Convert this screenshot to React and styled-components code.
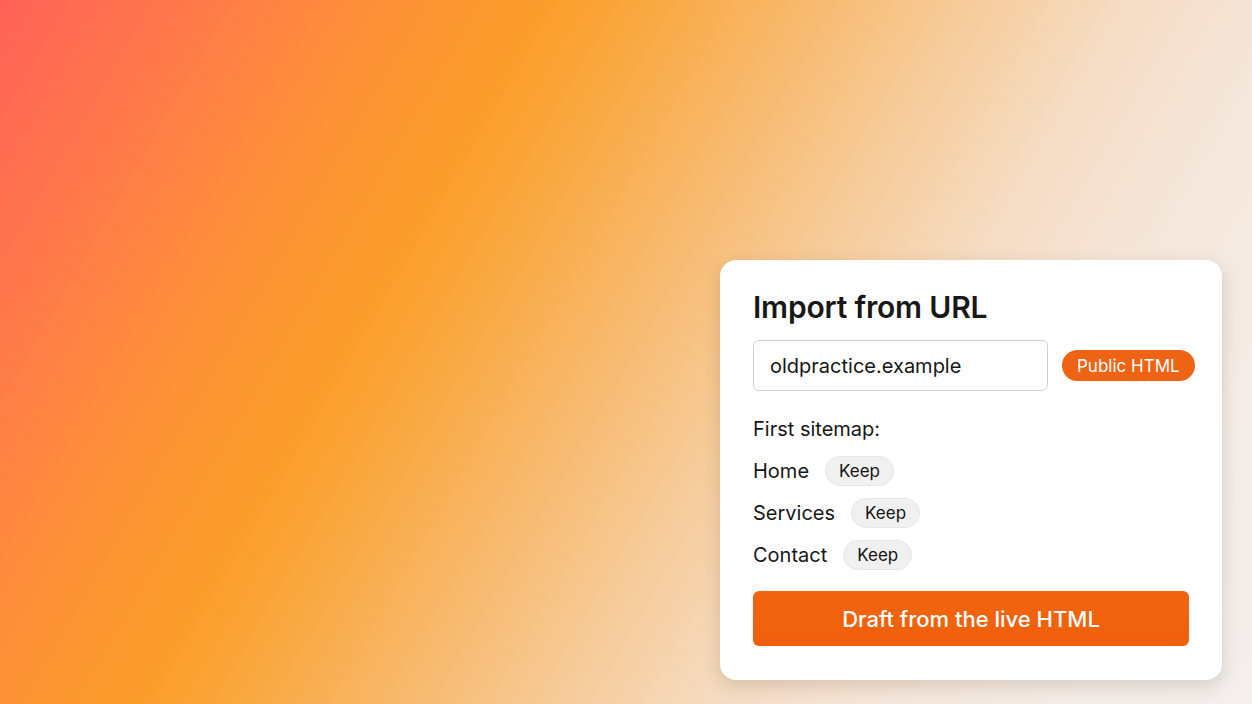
import React from 'react';
import styled, { createGlobalStyle } from 'styled-components';

const GlobalStyle = createGlobalStyle`
    * { box-sizing: border-box; }
    html, body {
        margin: 0;
        padding: 0;
        height: 100%;
    }
    body {
        font-family: Inter, "Noto Sans", "Liberation Sans", sans-serif;
        color: #161616;
    }
    #root { height: 100%; }
`;

const Backdrop = styled.div`
    height: 704px;
    width: 100%;
    display: flex;
    justify-content: flex-end;
    align-items: flex-start;
    padding: 260px 30px 0 0;
    background: linear-gradient(120deg,
        #ff6157 0%,
        #ff7a4a 12%,
        #fd9236 24%,
        #fb9d2a 33%,
        #f9a83f 39%,
        #f8b460 46%,
        #f6cb98 58%,
        #f5dcc3 68%,
        #f5e5d8 76%,
        #f4ece6 88%,
        #f3efec 100%);
`;

const Card = styled.div`
    width: 502px;
    height: 420px;
    background: #ffffff;
    border-radius: 16px;
    box-shadow: 0 6px 18px rgba(60, 40, 20, 0.16);
    padding: 29px 33px 34px 33px;
    display: flex;
    flex-direction: column;
`;

const Title = styled.h1`
    margin: 0;
    font-size: 30px;
    line-height: 36px;
    font-weight: 600;
    color: #181818;
    letter-spacing: -0.2px;
`;

const UrlRow = styled.div`
    margin-top: 15px;
    display: flex;
    align-items: center;
    gap: 14px;
`;

const UrlField = styled.div`
    flex: 0 0 295px;
    height: 51px;
    border: 1px solid #d2d2d2;
    border-radius: 6px;
    padding: 0 16px;
    display: flex;
    align-items: center;
    font-size: 20px;
    color: #151515;
`;

const Pill = styled.span`
    flex-shrink: 0;
    white-space: nowrap;
    display: inline-flex;
    align-items: center;
    justify-content: center;
    height: ${p => p.$tall ? '31px' : '30px'};
    padding: 0 ${p => p.$tall ? '15px' : '13px'};
    border-radius: 999px;
    font-size: 17px;
    background: ${p => p.$accent ? '#ee6314' : '#f0f0f0'};
    color: ${p => p.$accent ? '#ffffff' : '#141414'};
    border: ${p => p.$accent ? 'none' : '1px solid #e6e6e6'};
`;

const Label = styled.div`
    margin-top: 26px;
    font-size: 20px;
    line-height: 24px;
`;

const PageList = styled.div`
    margin-top: 15px;
    display: flex;
    flex-direction: column;
    gap: 12px;
`;

const PageRow = styled.div`
    display: flex;
    align-items: center;
    gap: 16px;
    font-size: 20px;
    height: 30px;
`;

const DraftButton = styled.button`
    margin-top: 21px;
    width: 436px;
    height: 55px;
    border: none;
    border-radius: 6px;
    background: linear-gradient(180deg, #f2640f 0%, #f0600c 100%);
    color: #ffffff;
    font-family: inherit;
    font-size: 22px;
    font-weight: 500;
    cursor: pointer;
`;

const pages = ['Home', 'Services', 'Contact'];

export default function App() {
    return (
        <>
            <GlobalStyle />
            <Backdrop>
                <Card>
                    <Title>Import from URL</Title>
                    <UrlRow>
                        <UrlField>oldpractice.example</UrlField>
                        <Pill $accent $tall>Public HTML</Pill>
                    </UrlRow>
                    <Label>First sitemap:</Label>
                    <PageList>
                        {pages.map(name => (
                            <PageRow key={name}>
                                <span>{name}</span>
                                <Pill>Keep</Pill>
                            </PageRow>
                        ))}
                    </PageList>
                    <DraftButton>Draft from the live HTML</DraftButton>
                </Card>
            </Backdrop>
        </>
    );
}
